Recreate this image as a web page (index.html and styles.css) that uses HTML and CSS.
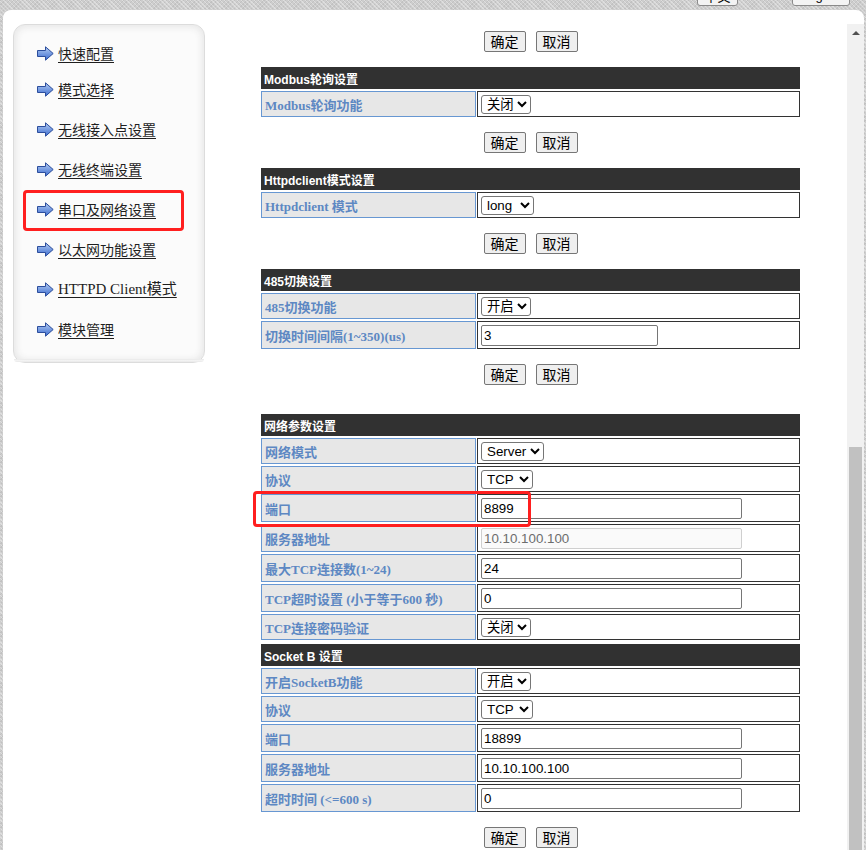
FILE: index.html
```html
<!DOCTYPE html>
<html lang="zh-CN">
<head>
<meta charset="utf-8">
<title>串口及网络设置</title>
<link rel="stylesheet" href="styles.css">
</head>
<body>
<div class="topbar">
  <button class="langbtn lang-cn" type="button">中文</button>
  <button class="langbtn lang-en" type="button">English</button>
</div>
<div class="frame">
  <div class="viewport">
    <aside class="sidebar">
      <ul class="menu">
        <li class="menu-first"><svg class="arrow" width="17" height="15" viewBox="0 0 17 15"><defs><linearGradient id="ag1" x1="0" y1="0" x2="0" y2="1"><stop offset="0" stop-color="#b4cdf3"/><stop offset="1" stop-color="#3b6bcf"/></linearGradient></defs><path d="M0.5 4.5H8.5V0.8L16.2 7.5L8.5 14.2V10.5H0.5Z" fill="url(#ag1)" stroke="#2b4d9c"/></svg><a href="#">快速配置</a></li>
        <li><svg class="arrow" width="17" height="15" viewBox="0 0 17 15"><defs><linearGradient id="ag2" x1="0" y1="0" x2="0" y2="1"><stop offset="0" stop-color="#b4cdf3"/><stop offset="1" stop-color="#3b6bcf"/></linearGradient></defs><path d="M0.5 4.5H8.5V0.8L16.2 7.5L8.5 14.2V10.5H0.5Z" fill="url(#ag2)" stroke="#2b4d9c"/></svg><a href="#">模式选择</a></li>
        <li><svg class="arrow" width="17" height="15" viewBox="0 0 17 15"><defs><linearGradient id="ag3" x1="0" y1="0" x2="0" y2="1"><stop offset="0" stop-color="#b4cdf3"/><stop offset="1" stop-color="#3b6bcf"/></linearGradient></defs><path d="M0.5 4.5H8.5V0.8L16.2 7.5L8.5 14.2V10.5H0.5Z" fill="url(#ag3)" stroke="#2b4d9c"/></svg><a href="#">无线接入点设置</a></li>
        <li><svg class="arrow" width="17" height="15" viewBox="0 0 17 15"><defs><linearGradient id="ag4" x1="0" y1="0" x2="0" y2="1"><stop offset="0" stop-color="#b4cdf3"/><stop offset="1" stop-color="#3b6bcf"/></linearGradient></defs><path d="M0.5 4.5H8.5V0.8L16.2 7.5L8.5 14.2V10.5H0.5Z" fill="url(#ag4)" stroke="#2b4d9c"/></svg><a href="#">无线终端设置</a></li>
        <li><svg class="arrow" width="17" height="15" viewBox="0 0 17 15"><defs><linearGradient id="ag5" x1="0" y1="0" x2="0" y2="1"><stop offset="0" stop-color="#b4cdf3"/><stop offset="1" stop-color="#3b6bcf"/></linearGradient></defs><path d="M0.5 4.5H8.5V0.8L16.2 7.5L8.5 14.2V10.5H0.5Z" fill="url(#ag5)" stroke="#2b4d9c"/></svg><a href="#">串口及网络设置</a></li>
        <li><svg class="arrow" width="17" height="15" viewBox="0 0 17 15"><defs><linearGradient id="ag6" x1="0" y1="0" x2="0" y2="1"><stop offset="0" stop-color="#b4cdf3"/><stop offset="1" stop-color="#3b6bcf"/></linearGradient></defs><path d="M0.5 4.5H8.5V0.8L16.2 7.5L8.5 14.2V10.5H0.5Z" fill="url(#ag6)" stroke="#2b4d9c"/></svg><a href="#">以太网功能设置</a></li>
        <li><svg class="arrow" width="17" height="15" viewBox="0 0 17 15"><defs><linearGradient id="ag7" x1="0" y1="0" x2="0" y2="1"><stop offset="0" stop-color="#b4cdf3"/><stop offset="1" stop-color="#3b6bcf"/></linearGradient></defs><path d="M0.5 4.5H8.5V0.8L16.2 7.5L8.5 14.2V10.5H0.5Z" fill="url(#ag7)" stroke="#2b4d9c"/></svg><a href="#" class="serif-link">HTTPD Client模式</a></li>
        <li><svg class="arrow" width="17" height="15" viewBox="0 0 17 15"><defs><linearGradient id="ag8" x1="0" y1="0" x2="0" y2="1"><stop offset="0" stop-color="#b4cdf3"/><stop offset="1" stop-color="#3b6bcf"/></linearGradient></defs><path d="M0.5 4.5H8.5V0.8L16.2 7.5L8.5 14.2V10.5H0.5Z" fill="url(#ag8)" stroke="#2b4d9c"/></svg><a href="#">模块管理</a></li>
      </ul>
      <div class="sidebar-foot"></div>
    </aside>

    <main class="main">
      <div class="actions"><button type="button">确定</button><button type="button">取消</button></div>

      <table class="cfg">
        <colgroup><col class="c-lbl"><col class="c-val"></colgroup>
        <tr class="hdr"><th colspan="2">Modbus轮询设置</th></tr>
        <tr class="r-sel"><td class="lbl">Modbus轮询功能</td><td class="val"><select class="w50"><option>关闭</option></select></td></tr>
      </table>
      <div class="actions"><button type="button">确定</button><button type="button">取消</button></div>

      <table class="cfg">
        <colgroup><col class="c-lbl"><col class="c-val"></colgroup>
        <tr class="hdr"><th colspan="2">Httpdclient模式设置</th></tr>
        <tr class="r-sel"><td class="lbl">Httpdclient 模式</td><td class="val"><select class="w53"><option>long</option></select></td></tr>
      </table>
      <div class="actions"><button type="button">确定</button><button type="button">取消</button></div>

      <table class="cfg">
        <colgroup><col class="c-lbl"><col class="c-val"></colgroup>
        <tr class="hdr"><th colspan="2">485切换设置</th></tr>
        <tr class="r-sel"><td class="lbl">485切换功能</td><td class="val"><select class="w50"><option>开启</option></select></td></tr>
        <tr class="r-inp"><td class="lbl">切换时间间隔(1~350)(us)</td><td class="val"><input class="w177" type="text" value="3"></td></tr>
      </table>
      <div class="actions"><button type="button">确定</button><button type="button">取消</button></div>

      <table class="cfg cfg-net">
        <colgroup><col class="c-lbl"><col class="c-val"></colgroup>
        <tr class="hdr"><th colspan="2">网络参数设置</th></tr>
        <tr class="r-sel"><td class="lbl">网络模式</td><td class="val"><select class="w63"><option>Server</option></select></td></tr>
        <tr class="r-sel"><td class="lbl">协议</td><td class="val"><select class="w52"><option>TCP</option></select></td></tr>
        <tr class="r-inp"><td class="lbl">端口</td><td class="val"><input type="text" value="8899"></td></tr>
        <tr class="r-inp"><td class="lbl">服务器地址</td><td class="val"><input type="text" value="10.10.100.100" disabled></td></tr>
        <tr class="r-inp"><td class="lbl">最大TCP连接数(1~24)</td><td class="val"><input type="text" value="24"></td></tr>
        <tr class="r-inp"><td class="lbl">TCP超时设置 (小于等于600 秒)</td><td class="val"><input type="text" value="0"></td></tr>
        <tr class="r-sel"><td class="lbl">TCP连接密码验证</td><td class="val"><select class="w50"><option>关闭</option></select></td></tr>
      </table>
      <table class="cfg cfg-sock">
        <colgroup><col class="c-lbl"><col class="c-val"></colgroup>
        <tr class="hdr"><th colspan="2">Socket B 设置</th></tr>
        <tr class="r-sel"><td class="lbl">开启SocketB功能</td><td class="val"><select class="w50"><option>开启</option></select></td></tr>
        <tr class="r-sel"><td class="lbl">协议</td><td class="val"><select class="w52"><option>TCP</option></select></td></tr>
        <tr class="r-inp"><td class="lbl">端口</td><td class="val"><input type="text" value="18899"></td></tr>
        <tr class="r-inp"><td class="lbl">服务器地址</td><td class="val"><input type="text" value="10.10.100.100"></td></tr>
        <tr class="r-inp"><td class="lbl">超时时间 (&lt;=600 s)</td><td class="val"><input type="text" value="0"></td></tr>
      </table>
      <div class="actions"><button type="button">确定</button><button type="button">取消</button></div>
    </main>
  </div>

  <div class="scrollbar">
    <div class="sb-up"><span class="sb-tri"></span></div>
    <div class="sb-thumb"></div>
  </div>

  <div class="mark mark-menu"></div>
  <div class="mark mark-port"></div>
</div>
</body>
</html>
```

FILE: styles.css
```css
html, body {
  margin: 0;
  padding: 0;
  height: 100%;
  overflow: hidden;
}

body {
  background-color: #cdcdcd;
  background-image:
    repeating-linear-gradient(45deg, rgba(255,255,255,0.35) 0 1px, transparent 1px 3px),
    repeating-linear-gradient(-45deg, rgba(0,0,0,0.06) 0 1px, transparent 1px 3px);
  font-family: "Liberation Sans", "Noto Sans CJK SC", sans-serif;
  color: #000;
}

/* top strip with language buttons (mostly scrolled out) */
.topbar {
  height: 6px;
  padding: 0 0 4px 697px;
  overflow: hidden;
  display: flex;
  align-items: flex-end;
  gap: 54px;
}

.langbtn {
  flex: none;
  height: 22px;
  background: #f3f3f3;
  border: 1px solid #8a8a8a;
  border-radius: 3px;
  font: 13px "Liberation Sans", "Noto Sans CJK SC", sans-serif;
  color: #000;
  padding: 0;
}
.lang-cn { width: 41px; }
.lang-en { width: 58px; }

/* white framed panel */
.frame {
  position: relative;
  margin-left: 3px;
  width: 861px;
  height: 840px;
  background: #fff;
  border-radius: 8px 8px 0 0;
  display: flex;
  overflow: hidden;
}

.viewport {
  flex: 1;
  display: flex;
  align-items: flex-start;
  overflow: hidden;
}

/* sidebar */
.sidebar {
  flex: none;
  margin: 14px 0 0 10px;
  width: 192px;
  height: 339px;
  box-sizing: border-box;
  border: 1px solid #dcdcdc;
  border-radius: 12px;
  background: #fbfbfb;
  box-shadow: inset 0 0 7px 2px #e6e6e6;
  display: flex;
  flex-direction: column;
}

.menu {
  list-style: none;
  margin: 0;
  padding: 18px 0 0 23px;
  flex: 1;
}

.menu li {
  display: flex;
  align-items: center;
  height: 20px;
  margin-bottom: 20px;
  gap: 4px;
}
.menu li.menu-first { margin-bottom: 16px; }

.arrow { flex: none; display: block; }

.menu a {
  font: 14px/20px "Noto Sans CJK SC", sans-serif;
  color: #1e1e1e;
  text-decoration: underline;
  text-underline-offset: 3px;
}
.menu a.serif-link {
  font-family: "Liberation Serif", "Noto Sans CJK SC", serif;
  font-size: 15px;
}

.sidebar-foot {
  height: 18px;
  border-top: 1px solid #ececec;
  border-radius: 0 0 11px 11px;
  background: linear-gradient(#f6f6f6, #e9e9e9);
}

/* main */
.main {
  flex: none;
  margin-left: 55px;
  width: 541px;
  padding-top: 21px;
}

.actions {
  display: flex;
  justify-content: center;
  gap: 10px;
  height: 21px;
  margin-bottom: 13px;
}

.actions button {
  height: 21px;
  width: 42px;
  padding: 0;
  background: #efefef;
  border: 1px solid #767676;
  border-radius: 2px;
  font: 14px "Noto Sans CJK SC", sans-serif;
  color: #000;
  line-height: 19px;
}

.cfg {
  width: 541px;
  border-collapse: separate;
  border-spacing: 1px 2px;
  margin: 0 0 13px 0;
  table-layout: fixed;
}

.c-lbl { width: 215px; }
.c-val { width: auto; }

.cfg.cfg-net { margin: 27px 0 0 0; }

.hdr th {
  height: 22px;
  padding: 0 3px;
  background: #313131;
  color: #fff;
  text-align: left;
  font: bold 12px "Liberation Sans", "Noto Sans CJK SC", sans-serif;
  vertical-align: middle;
}

.r-sel { height: 26px; }
.r-inp { height: 28px; }

.lbl {
  padding: 0 3px;
  background: #e7e7e7;
  border: 1px solid #6797d2;
  color: #5d88c3;
  font: bold 13px "Liberation Serif", "Noto Sans CJK SC", serif;
  vertical-align: middle;
  white-space: nowrap;
  overflow: hidden;
}

.val {
  padding: 0 3px;
  border: 1px solid #333;
  vertical-align: middle;
}

.val select {
  display: block;
  height: 19px;
  box-sizing: border-box;
  font: 13.33px "Liberation Sans", "Noto Sans CJK SC", sans-serif;
  color: #000;
  background: #fff;
  border: 1px solid #767676;
  border-radius: 3px;
  padding: 0 0 0 1px;
}
.w50 { width: 50px; }
.w52 { width: 52px; }
.w53 { width: 53px; }
.w63 { width: 63px; }

.val input {
  display: block;
  width: 261px;
  height: 21px;
  box-sizing: border-box;
  padding: 1px 2px;
  border: 1px solid #767676;
  border-radius: 2px;
  font: 13.33px "Liberation Sans", sans-serif;
  color: #000;
  background: #fff;
}
.val input.w177 { width: 177px; }
.val input:disabled {
  background: #fafafa;
  border-color: #cfcfcf;
  color: #6d6d6d;
}

/* fake scrollbar */
.scrollbar {
  flex: none;
  width: 17px;
  margin-top: 14px;
  background: #f1f1f1;
  display: flex;
  flex-direction: column;
}

.sb-up {
  height: 17px;
  display: flex;
  align-items: center;
  justify-content: center;
}

.sb-tri {
  width: 0;
  height: 0;
  border-left: 4px solid transparent;
  border-right: 4px solid transparent;
  border-bottom: 4px solid #505050;
}

.sb-thumb {
  flex: 1;
  margin: 406px 2px 0 2px;
  background: #c1c1c1;
}

/* red annotation boxes */
.mark {
  position: absolute;
  border: 3px solid #ff1f1f;
  border-radius: 4px;
  box-sizing: border-box;
  pointer-events: none;
}
.mark-menu {
  left: 20px;
  top: 180px;
  width: 161px;
  height: 41px;
}
.mark-port {
  left: 250px;
  top: 481px;
  width: 278px;
  height: 36px;
}
```
